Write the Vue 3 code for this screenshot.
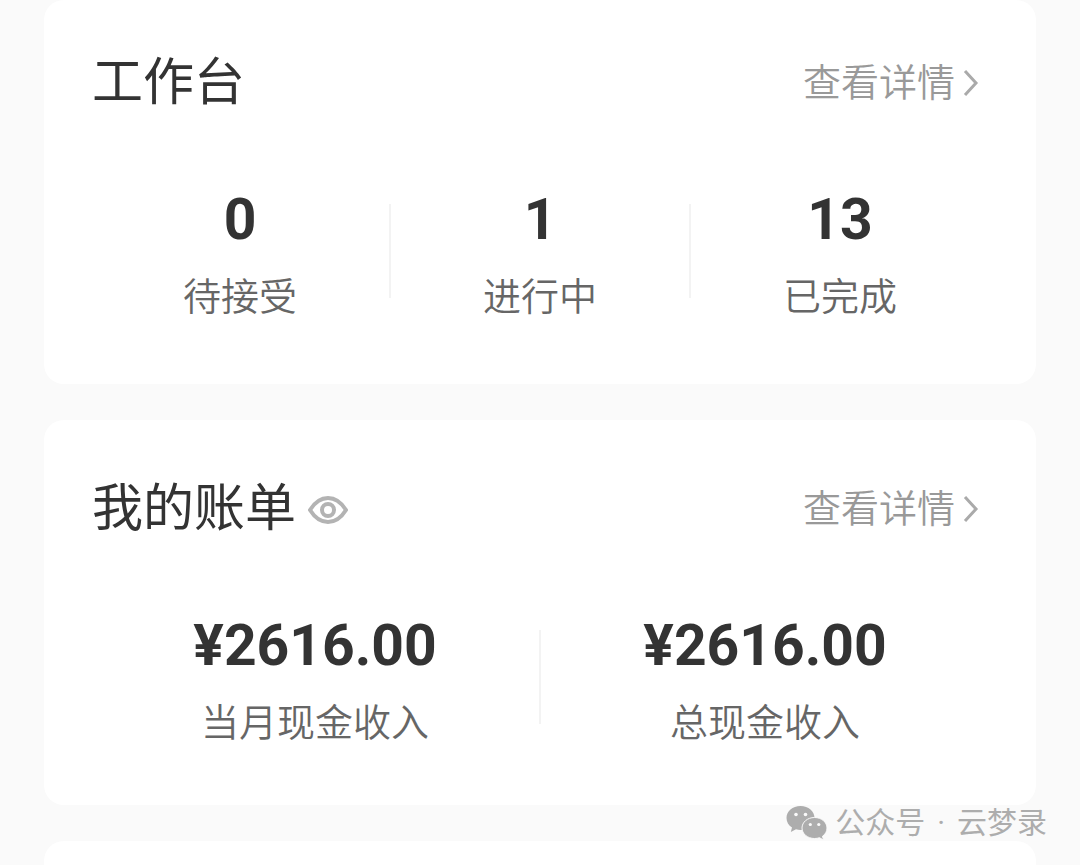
<script setup>
const tasks = [
  { value: '0', label: '待接受' },
  { value: '1', label: '进行中' },
  { value: '13', label: '已完成' },
]
const bills = [
  { value: '¥2616.00', label: '当月现金收入' },
  { value: '¥2616.00', label: '总现金收入' },
]
</script>

<template>
  <main class="page">
    <section class="card first">
      <header class="head">
        <h2 class="title">工作台</h2>
        <a class="more" href="#">
          查看详情
          <svg class="chevron" viewBox="0 0 16 30" aria-hidden="true"><path d="M2 3 L13 15 L2 27" /></svg>
        </a>
      </header>
      <div class="stats">
        <div v-for="item in tasks" :key="item.label" class="stat">
          <strong class="value">{{ item.value }}</strong>
          <span class="label">{{ item.label }}</span>
        </div>
      </div>
    </section>

    <section class="card">
      <header class="head">
        <h2 class="title">我的账单</h2>
        <button class="eye" type="button" aria-label="显示或隐藏金额">
          <svg viewBox="0 0 40 28" aria-hidden="true">
            <path d="M2 14 C7 6 13 2 20 2 S33 6 38 14 C33 22 27 26 20 26 S7 22 2 14 Z" />
            <circle cx="20" cy="14" r="6" />
          </svg>
        </button>
        <a class="more" href="#">
          查看详情
          <svg class="chevron" viewBox="0 0 16 30" aria-hidden="true"><path d="M2 3 L13 15 L2 27" /></svg>
        </a>
      </header>
      <div class="stats">
        <div v-for="item in bills" :key="item.label" class="stat">
          <strong class="value">{{ item.value }}</strong>
          <span class="label">{{ item.label }}</span>
        </div>
      </div>
    </section>

    <section class="card next"></section>

    <div class="watermark">
      <svg viewBox="0 0 41 36" aria-hidden="true">
        <path class="bubble" d="M14.5 1 C6.5 1 0.5 6.2 0.5 13 C0.5 17 2.6 20.3 6 22.5 L4.8 27 L10 24.3 C11.5 24.8 13 25 14.5 25 C22.5 25 28.5 19.8 28.5 13 S22.5 1 14.5 1 Z" />
        <path class="bubble front" d="M28.5 12.5 C21.5 12.5 16 17.2 16 23 S21.5 33.5 28.5 33.5 C30.3 33.5 32 33.2 33.5 32.7 L37.5 35 L36.5 31.2 C39.4 29.3 41 26.3 41 23 C41 17.2 35.5 12.5 28.5 12.5 Z" />
        <circle cx="10" cy="9.5" r="1.8" />
        <circle cx="19.5" cy="9.5" r="1.8" />
        <circle cx="24.3" cy="19.5" r="1.6" />
        <circle cx="32.8" cy="19.5" r="1.6" />
      </svg>
      <span class="source"><span>公众号</span><span>·</span><span>云梦录</span></span>
    </div>
  </main>
</template>

<style>
body {
  margin: 0;
  background: #fafafa;
}
</style>

<style scoped>
.page {
  position: relative;
  box-sizing: border-box;
  min-height: 100vh;
  padding: 0 44px;
  display: flex;
  flex-direction: column;
  gap: 36px;
  overflow: hidden;
  color: #333;
  font-family: Roboto, "Noto Sans CJK SC", sans-serif;
}
.card {
  padding: 57px 46px 58px;
  border-radius: 20px;
  background: #fff;
}
.first {
  padding-top: 51px;
  padding-bottom: 63px;
}
.next {
  flex: 1;
  padding: 0;
  border-radius: 20px 20px 0 0;
}
.head {
  display: flex;
  align-items: center;
  height: 64px;
  padding: 0 11px 0 2px;
}
.title {
  margin: 0;
  font-size: 51px;
  font-weight: 400;
  line-height: 66px;
}
.eye {
  display: flex;
  margin: 2px 0 0 12px;
  padding: 0;
  border: 0;
  background: none;
}
.eye svg {
  width: 40px;
  height: 28px;
  fill: none;
  stroke: #b3b3b3;
  stroke-width: 4;
}
.more {
  display: flex;
  align-items: center;
  gap: 8px;
  margin-left: auto;
  color: #999;
  font-size: 38px;
  font-weight: 350;
  line-height: 48px;
  text-decoration: none;
}
.chevron {
  width: 16px;
  height: 30px;
  fill: none;
  stroke: #aaa;
  stroke-width: 3;
}
.stats {
  display: flex;
  margin-top: 72px;
}
.stat {
  position: relative;
  flex: 1;
  display: flex;
  flex-direction: column;
  align-items: center;
  gap: 20px;
}
.stat + .stat::before {
  content: "";
  position: absolute;
  left: -1px;
  top: 17px;
  width: 2px;
  height: 94px;
  background: #f3f3f3;
}
.value {
  font-size: 57px;
  font-weight: 700;
  line-height: 66px;
}
.label {
  color: #666;
  font-size: 38px;
  font-weight: 350;
  line-height: 48px;
}
.watermark {
  position: absolute;
  right: 33px;
  bottom: 22px;
  display: flex;
  align-items: center;
  gap: 8px;
  color: #adadad;
  font-size: 30px;
  line-height: 40px;
}
.source {
  display: flex;
  gap: 12px;
}
.watermark svg {
  width: 41px;
  height: 36px;
  fill: #fafafa;
}
.watermark .bubble {
  fill: #adadad;
}
.watermark .front {
  stroke: #fafafa;
  stroke-width: 1;
}
</style>
